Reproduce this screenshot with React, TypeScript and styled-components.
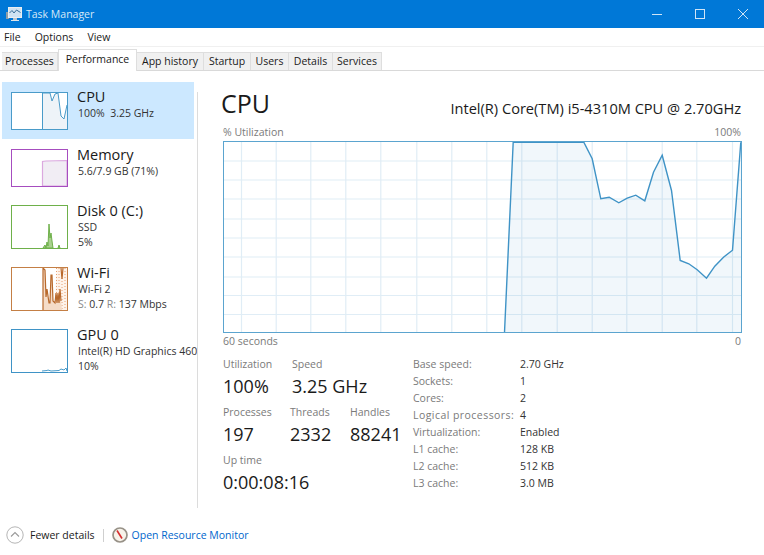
import React from "react";
import styled, { createGlobalStyle } from "styled-components";

const Global = createGlobalStyle`
  html, body { margin: 0; padding: 0; background: #fff; }
  body { font-family: "Open Sans", "Noto Sans", "Liberation Sans", sans-serif; color: #1a1a1a; overflow: hidden; }
`;

const Page = styled.div`
  width: 764px;
  height: 555px;
  display: flex;
  flex-direction: column;
  background: #fff;
  overflow: hidden;
`;

const TitleBar = styled.header`
  height: 28px;
  background: #0078d7;
  display: flex;
  align-items: center;
  padding-left: 6px;
  color: #d6e9f8;
  font-size: 10.5px;
`;
const TitleText = styled.span`
  margin-left: 4px;
  flex: 1;
`;
const WinBtn = styled.div`
  width: 43px;
  height: 27px;
  display: flex;
  align-items: center;
  justify-content: center;
`;

const MenuBar = styled.nav`
  height: 18px;
  display: flex;
  align-items: center;
  gap: 14px;
  padding-left: 4px;
  font-size: 10.5px;
  border-bottom: 1px solid #f0f0f0;
  box-sizing: content-box;
`;

const TabStrip = styled.div`
  height: 23px;
  display: flex;
  align-items: flex-end;
  border-bottom: 1px solid #d9d9d9;
  padding-left: 2px;
  box-sizing: content-box;
`;
const Tab = styled.div<{ $active?: boolean; $w: number }>`
  width: ${p => p.$w}px;
  height: ${p => (p.$active ? 22 : 18)}px;
  padding-bottom: ${p => (p.$active ? 3 : 1)}px;
  margin-bottom: ${p => (p.$active ? -1 : 0)}px;
  box-sizing: border-box;
  display: flex;
  align-items: center;
  justify-content: center;
  font-size: 10.5px;
  background: ${p => (p.$active ? "#fff" : "#f0f0f0")};
  border-top: 1px solid #dedede;
  border-right: 1px solid #dedede;
  border-left: ${p => (p.$active ? "1px solid #dedede" : "0")};
  white-space: nowrap;
`;

const Body = styled.div`
  flex: 1;
  display: flex;
  min-height: 0;
`;

const Sidebar = styled.aside`
  width: 195px;
  margin: 11px 0 0 2px;
  display: flex;
  flex-direction: column;
  overflow: hidden;
`;
const Item = styled.div<{ $selected?: boolean; $h: number }>`
  width: 192px;
  height: ${p => p.$h}px;
  flex: none;
  display: flex;
  gap: 9px;
  padding: 10px 0 0 9px;
  box-sizing: border-box;
  background: ${p => (p.$selected ? "#cce8ff" : "transparent")};
`;
const Thumb = styled.svg`
  flex: none;
  display: block;
`;
const ItemText = styled.div<{ $top: number }>`
  display: flex;
  flex-direction: column;
  white-space: nowrap;
  margin-top: ${p => p.$top}px;
`;
const ItemTitle = styled.div`
  font-size: 14.5px;
  line-height: 18px;
`;
const ItemLine = styled.div`
  font-size: 10.5px;
  line-height: 14.5px;
  color: #333;
  padding-left: 1px;
`;
const Muted = styled.span`
  color: #888;
`;

const Divider = styled.div`
  width: 1px;
  margin: 21px 0 0;
  background: #dcdcdc;
`;

const Main = styled.main`
  width: 518px;
  margin: 16px 0 0 25px;
  display: flex;
  flex-direction: column;
`;
const Head = styled.div`
  display: flex;
  justify-content: space-between;
  align-items: flex-start;
  height: 37px;
`;
const HeadTitle = styled.h1`
  margin: 0 0 0 -2px;
  font-size: 25px;
  font-weight: 400;
  line-height: 33px;
`;
const HeadCpu = styled.div`
  font-size: 14.6px;
  line-height: 20px;
  padding-top: 11px;
  white-space: nowrap;
`;
const AxisRow = styled.div`
  display: flex;
  justify-content: space-between;
  font-size: 10.5px;
  color: #7a7a7a;
  height: 16px;
  line-height: 16px;
`;
const Chart = styled.svg`
  display: block;
  margin-top: 1px;
  flex: none;
`;

const Details = styled.div`
  display: flex;
  margin-top: 8px;
`;
const Stats = styled.div`
  width: 190px;
  display: flex;
  flex-direction: column;
`;
const StatRow = styled.div`
  display: flex;
  height: 48px;
`;
const Stat = styled.div<{ $w: number }>`
  width: ${p => p.$w}px;
  display: flex;
  flex-direction: column;
  white-space: nowrap;
`;
const StatLabel = styled.div`
  font-size: 10.5px;
  line-height: 14px;
  color: #7a7a7a;
`;
const StatValue = styled.div`
  font-size: 18px;
  line-height: 24px;
  margin-top: 3px;
  color: #1a1a1a;
`;
const Specs = styled.dl`
  margin: 0;
  display: grid;
  grid-template-columns: 107px auto;
  grid-auto-rows: 17px;
  font-size: 10.5px;
  line-height: 14px;
`;
const SpecKey = styled.dt<{ $wide?: boolean }>`
  color: #7a7a7a;
  letter-spacing: ${p => (p.$wide ? "0.45px" : "0")};
`;
const SpecVal = styled.dd`
  margin: 0;
  color: #333;
`;

const Footer = styled.footer`
  height: 47px;
  display: flex;
  align-items: flex-start;
  padding: 18px 0 0 6px;
  box-sizing: border-box;
  font-size: 10.5px;
  flex: none;
`;
const FooterInner = styled.div`
  display: flex;
  align-items: center;
  height: 18px;
`;
const Sep = styled.div`
  width: 1px;
  height: 13px;
  background: #cfcfcf;
  margin: 0 8px;
`;
const Link = styled.a`
  color: #0066cc;
  margin-left: 4px;
`;
const Label = styled.span`
  margin-left: 6px;
`;

const W = 518, H = 191;
const offX = 223, offY = 141;
const pts: [number, number][] = [
  [504, 332], [512.7, 141.7], [583.3, 141.7], [591.7, 158.3], [600.3, 198.3], [608.7, 196.7], [618.3, 202.3],
  [626.7, 197.7], [635.3, 194.7], [644.3, 200.3], [653, 171.7], [661.7, 154.7], [671, 190], [679.7, 260],
  [688.3, 263.3], [696.7, 269.3], [706, 277.7], [714.3, 265.7], [723, 256.7], [732, 249.7], [740.3, 141.7],
];
const rel = pts.map(([x, y]) => [x - offX, y - offY]);
const lineD = rel.map(([x, y]) => `${x},${y}`).join(" ");
const hGrid = [19.5, 38.5, 57.5, 77.5, 96.5, 115.5, 135.5, 154, 173];
const vGrid = [18, 52.7, 87.3, 122.3, 157.3, 193.3, 228.3, 263.3, 298.3, 333.7, 368.7, 403.3, 438.7, 473.3, 509];

const CpuChart = () => (
  <Chart width={W + 1} height={H + 1} viewBox={`-0.5 -0.5 ${W + 1} ${H + 1}`}>
    <rect x={0} y={0} width={W} height={H} fill="#fff" />
    {hGrid.map(y => <line key={y} x1={0} x2={W} y1={y} y2={y} stroke="#e0edf6" strokeWidth={1.2} />)}
    {vGrid.map(x => <line key={x} x1={x} x2={x} y1={0} y2={H} stroke="#e0edf6" strokeWidth={1.2} />)}
    <polygon points={`${lineD} 518,191`} fill="#117dbb" fillOpacity={0.06} />
    <polyline points={lineD} fill="none" stroke="#3f93c6" strokeWidth={1.4} />
    <rect x={0} y={0} width={W} height={H} fill="none" stroke="#5ba4cf" strokeWidth={1} />
  </Chart>
);

const CpuThumb = () => (
  <Thumb width={57} height={38} viewBox="0 0 57 38">
    <rect x={0.5} y={0.5} width={56} height={37} fill="#fff" />
    <path d="M31.5 1 L39 1 L41 9 L44 2 L47 1 L50 24 L53 27 L56 13 L56 37 L31.5 37 Z" fill="#eef3f8" />
    <path d="M31.5 37 L31.5 1 L39 1 L41 9 L44 2 L47 1 L50 24 L53 27 L56 13" fill="none" stroke="#4a9bc9" />
    <rect x={0.5} y={0.5} width={56} height={37} fill="none" stroke="#4a9bc9" />
  </Thumb>
);
const MemThumb = () => (
  <Thumb width={57} height={38} viewBox="0 0 57 38">
    <rect x={0.5} y={0.5} width={56} height={37} fill="#fff" />
    <path d="M31.5 37 L31.5 12.5 L35 12 L56 11.5 L56 37 Z" fill="#f1edf4" stroke="#dba8df" strokeWidth={1.2} />
    <rect x={0.5} y={0.5} width={56} height={37} fill="none" stroke="#a64dbf" />
  </Thumb>
);
const DiskThumb = () => (
  <Thumb width={57} height={44} viewBox="0 0 57 44">
    <rect x={0.5} y={0.5} width={56} height={43} fill="#fff" />
    <path d="M32 43 L34 40 L35 43 L36 37 L37 41 L38 19 L39 33 L40 28 L41 36 L42 43 Z M47 43 L48 40 L49 43 Z" fill="#a9d18e" stroke="#6eb04a" />
    <rect x={0.5} y={0.5} width={56} height={43} fill="none" stroke="#6eb04a" />
  </Thumb>
);
const WifiThumb = () => (
  <Thumb width={57} height={44} viewBox="0 0 57 44">
    <rect x={0.5} y={0.5} width={56} height={43} fill="#fff" />
    <path d="M44 43 L45 12 L46 1 L56 1 L56 43 Z" fill="#fef3ea" />
    <path d="M45.5 1 V43 M48 1 V43 M51 8 V43 M54 1 V43" stroke="#e8a070" strokeDasharray="1 2" fill="none" />
    <path d="M32 43 L32 1 L34 3 L35 30 L36 22 L38 36 L39 36 L40 8 L41 8 L42 34 L44 36 L45 26 L46 36 L47 26 L48 36 L49 22 L50 34 L51 43 Z" fill="#f5dcc8" />
    <path d="M32 43 L32 1 L34 3 L35 30 L36 22 L38 36 L39 36 L40 8 L41 8 L42 34 L44 36 L45 26 L46 36 L47 26 L48 36 L49 22 L50 34 M50 1 L51 12 L52 1" fill="none" stroke="#b8692c" strokeWidth={1.2} />
    <rect x={0.5} y={0.5} width={56} height={43} fill="none" stroke="#c47f45" />
  </Thumb>
);
const GpuThumb = () => (
  <Thumb width={57} height={44} viewBox="0 0 57 44">
    <rect x={0.5} y={0.5} width={56} height={43} fill="#fff" />
    <path d="M31 42 L36 41.5 L37 41 L40 42 L48 41.5 L50 40 L53 41 L55 39 L56 42" fill="none" stroke="#4a9bc9" />
    <rect x={0.5} y={0.5} width={56} height={43} fill="none" stroke="#3f93c6" />
  </Thumb>
);

const AppIcon = () => (
  <svg width={16} height={16} viewBox="0 0 16 16">
    <rect x={0} y={6} width={3} height={7} fill="#8d9ea8" />
    <rect x={2.5} y={1.5} width={13} height={10} fill="#cfe3f2" stroke="#e9eef2" />
    <path d="M3.5 7 L6 4.5 L8 7 L10.5 4 L14.5 6.5" fill="none" stroke="#3b6f99" />
    <rect x={7} y={12} width={4} height={2} fill="#b8c4cc" />
    <rect x={5} y={14} width={8} height={1} fill="#dfe5ea" />
  </svg>
);

const MonitorIcon = () => (
  <svg width={16} height={16} viewBox="0 0 16 16">
    <circle cx={8} cy={8} r={7} fill="#f7f3ea" stroke="#979187" strokeWidth={1.7} />
    <path d="M5 3.5 L10 11.5" stroke="#d62f2f" strokeWidth={1.6} />
  </svg>
);

const FewerIcon = () => (
  <svg width={18} height={18} viewBox="0 0 18 18">
    <circle cx={9} cy={9} r={8.2} fill="#fff" stroke="#b5b5b5" />
    <path d="M5 10.5 L9 6.5 L13 10.5" fill="none" stroke="#9a9a9a" strokeWidth={1.1} />
  </svg>
);

export default function App() {
  return (
    <Page>
      <Global />
      <TitleBar>
        <AppIcon />
        <TitleText>Task Manager</TitleText>
        <WinBtn>
          <svg width={10} height={10}><path d="M0 5.5 H10" stroke="#cfe4f6" /></svg>
        </WinBtn>
        <WinBtn>
          <svg width={10} height={10}><rect x={0.5} y={0.5} width={9} height={9} fill="none" stroke="#cfe4f6" /></svg>
        </WinBtn>
        <WinBtn>
          <svg width={10} height={10}><path d="M0 0 L10 10 M10 0 L0 10" stroke="#cfe4f6" /></svg>
        </WinBtn>
      </TitleBar>
      <MenuBar>
        <span>File</span>
        <span>Options</span>
        <span>View</span>
      </MenuBar>
      <TabStrip>
        <Tab $w={56}>Processes</Tab>
        <Tab $active $w={79}>Performance</Tab>
        <Tab $w={67}>App history</Tab>
        <Tab $w={47}>Startup</Tab>
        <Tab $w={38}>Users</Tab>
        <Tab $w={44}>Details</Tab>
        <Tab $w={49}>Services</Tab>
      </TabStrip>
      <Body>
        <Sidebar>
          <Item $selected $h={57}>
            <CpuThumb />
            <ItemText $top={-4}>
              <ItemTitle>CPU</ItemTitle>
              <ItemLine>100%&nbsp; 3.25 GHz</ItemLine>
            </ItemText>
          </Item>
          <Item $h={56}>
            <MemThumb />
            <ItemText $top={-3}>
              <ItemTitle>Memory</ItemTitle>
              <ItemLine>5.6/7.9 GB (71%)</ItemLine>
            </ItemText>
          </Item>
          <Item $h={62}>
            <DiskThumb />
            <ItemText $top={-3}>
              <ItemTitle>Disk 0 (C:)</ItemTitle>
              <ItemLine>SSD</ItemLine>
              <ItemLine>5%</ItemLine>
            </ItemText>
          </Item>
          <Item $h={62}>
            <WifiThumb />
            <ItemText $top={-3}>
              <ItemTitle>Wi-Fi</ItemTitle>
              <ItemLine>Wi-Fi 2</ItemLine>
              <ItemLine><Muted>S:</Muted> 0.7 <Muted>R:</Muted> 137 Mbps</ItemLine>
            </ItemText>
          </Item>
          <Item $h={62}>
            <GpuThumb />
            <ItemText $top={-3}>
              <ItemTitle>GPU 0</ItemTitle>
              <ItemLine>Intel(R) HD Graphics 4600</ItemLine>
              <ItemLine>10%</ItemLine>
            </ItemText>
          </Item>
        </Sidebar>
        <Divider />
        <Main>
          <Head>
            <HeadTitle>CPU</HeadTitle>
            <HeadCpu>Intel(R) Core(TM) i5-4310M CPU @ 2.70GHz</HeadCpu>
          </Head>
          <AxisRow><span>% Utilization</span><span>100%</span></AxisRow>
          <CpuChart />
          <AxisRow><span>60 seconds</span><span>0</span></AxisRow>
          <Details>
            <Stats>
              <StatRow>
                <Stat $w={69}><StatLabel>Utilization</StatLabel><StatValue>100%</StatValue></Stat>
                <Stat $w={100}><StatLabel>Speed</StatLabel><StatValue>3.25 GHz</StatValue></Stat>
              </StatRow>
              <StatRow>
                <Stat $w={67}><StatLabel>Processes</StatLabel><StatValue>197</StatValue></Stat>
                <Stat $w={60}><StatLabel>Threads</StatLabel><StatValue>2332</StatValue></Stat>
                <Stat $w={60}><StatLabel>Handles</StatLabel><StatValue>88241</StatValue></Stat>
              </StatRow>
              <StatRow>
                <Stat $w={120}><StatLabel>Up time</StatLabel><StatValue>0:00:08:16</StatValue></Stat>
              </StatRow>
            </Stats>
            <Specs>
              <SpecKey>Base speed:</SpecKey><SpecVal>2.70 GHz</SpecVal>
              <SpecKey>Sockets:</SpecKey><SpecVal>1</SpecVal>
              <SpecKey>Cores:</SpecKey><SpecVal>2</SpecVal>
              <SpecKey $wide>Logical processors:</SpecKey><SpecVal>4</SpecVal>
              <SpecKey>Virtualization:</SpecKey><SpecVal>Enabled</SpecVal>
              <SpecKey>L1 cache:</SpecKey><SpecVal>128 KB</SpecVal>
              <SpecKey>L2 cache:</SpecKey><SpecVal>512 KB</SpecVal>
              <SpecKey>L3 cache:</SpecKey><SpecVal>3.0 MB</SpecVal>
            </Specs>
          </Details>
        </Main>
      </Body>
      <Footer>
        <FooterInner>
          <FewerIcon />
          <Label>Fewer details</Label>
          <Sep />
          <MonitorIcon />
          <Link>Open Resource Monitor</Link>
        </FooterInner>
      </Footer>
    </Page>
  );
}
